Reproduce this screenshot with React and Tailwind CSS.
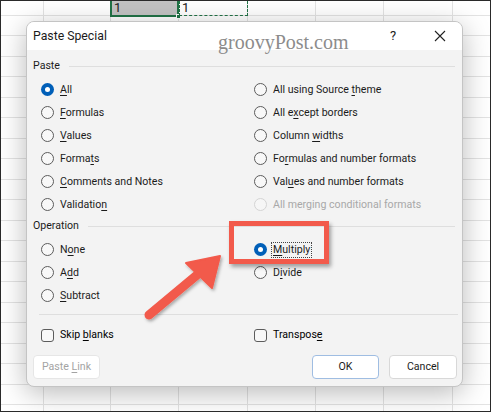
import React from "react";

const font = { fontFamily: "Roboto, Lato, 'Noto Sans', sans-serif" };

const colW = [43, 67, 68, 69, 68, 68, 69, 70];
const rowH = [15, 20, 21, 20, 21, 20, 21, 20, 21, 20, 21, 20, 21, 20, 21, 20, 21, 20, 21, 20, 21];

function Mn({ text, at }) {
  if (at < 0) return <span>{text}</span>;
  return (
    <span>
      {text.slice(0, at)}
      <span className="underline decoration-1 underline-offset-2">{text[at]}</span>
      {text.slice(at + 1)}
    </span>
  );
}

function Radio({ checked, disabled }) {
  if (checked) {
    return (
      <span className="w-[13px] h-[13px] rounded-full bg-[#005fb8] flex items-center justify-center shrink-0">
        <span className="w-[5px] h-[5px] rounded-full bg-white" />
      </span>
    );
  }
  return (
    <span
      className={
        "w-[13px] h-[13px] rounded-full border shrink-0 " +
        (disabled ? "border-[#d4d4d4] bg-[#f6f6f6]" : "border-[#5c5c5c] bg-[#f8f8f8]")
      }
    />
  );
}

function Option({ text, at, checked, disabled, focus }) {
  return (
    <div className="h-[23px] flex items-center gap-[6px]">
      <Radio checked={checked} disabled={disabled} />
      <span
        className={
          (disabled ? "text-[#a8a8a8] " : "text-[#1b1b1b] ") +
          (focus ? "border border-dotted border-[#444] px-[1px] -ml-[2px] leading-[14px]" : "")
        }
      >
        <Mn text={text} at={at} />
      </span>
    </div>
  );
}

function SectionLabel({ title }) {
  return (
    <div className="h-[16px] flex items-center">
      <span className="text-[#1b1b1b]">{title}</span>
      <div className="flex-1 h-px bg-[#dedede] ml-[9px]" />
    </div>
  );
}

function Check({ text, at }) {
  return (
    <div className="h-[20px] flex items-center gap-[6px]">
      <span className="w-[13px] h-[13px] rounded-[3px] border border-[#5c5c5c] bg-[#f8f8f8]" />
      <Mn text={text} at={at} />
    </div>
  );
}

export default function App() {
  return (
    <div
      className="relative w-[491px] h-[412px] overflow-hidden bg-white border border-[#2a2a2a] text-[10.6px]"
      style={font}
    >
      {/* sheet grid */}
      <div className="flex flex-col">
        {rowH.map((h, r) => (
          <div key={r} className="flex" style={{ height: h }}>
            {colW.map((w, c) => (
              <div
                key={c}
                className="border-r border-b border-[#e3e3e3] shrink-0"
                style={{ width: w }}
              />
            ))}
          </div>
        ))}
      </div>

      {/* copied cells */}
      <div className="absolute left-[109px] top-0 w-[69px] h-[16px] bg-[#c3c3c3] border-2 border-t-0 border-[#217346] text-[13px] leading-[13px] pl-[2px] text-[#222]">
        1
      </div>
      <div className="absolute left-[175px] top-[13px] w-[5px] h-[5px] bg-[#217346] border border-white" />
      <div className="absolute left-[178px] top-0 w-[69px] h-[15px] border border-t-0 border-dashed border-[#217346] text-[13px] leading-[13px] pl-[2px] text-[#222]">
        1
      </div>

      {/* dialog */}
      <div className="absolute left-[25px] top-[20px] w-[437px] h-[366px] rounded-[8px] bg-[#f3f3f3] border border-[#c4c4c4] shadow-[0_6px_28px_rgba(0,0,0,0.28)] flex flex-col overflow-hidden">
        <div className="h-[28px] bg-white flex items-center pl-[6px] shrink-0">
          <span className="text-[12.25px] text-[#1b1b1b]">Paste Special</span>
          <span className="ml-auto mr-[15px] text-[13px] text-[#1b1b1b] w-[20px] text-center">?</span>
          <span className="w-[44px] flex justify-center">
            <svg width="12" height="12" viewBox="0 0 12 12">
              <path d="M1 1 L11 11 M11 1 L1 11" stroke="#222" strokeWidth="1.1" />
            </svg>
          </span>
        </div>

        <div className="flex flex-col pl-[6px] pr-[7px] pt-[8px]">
          <SectionLabel title="Paste" />
          <div className="grid grid-cols-[213px_1fr] pl-[8px] mt-[4px]">
            <div className="flex flex-col">
              <Option text="All" at={0} checked />
              <Option text="Formulas" at={0} />
              <Option text="Values" at={0} />
              <Option text="Formats" at={5} />
              <Option text="Comments and Notes" at={0} />
              <Option text="Validation" at={9} />
            </div>
            <div className="flex flex-col">
              <Option text="All using Source theme" at={17} />
              <Option text="All except borders" at={5} />
              <Option text="Column widths" at={7} />
              <Option text="Formulas and number formats" at={2} />
              <Option text="Values and number formats" at={3} />
              <Option text="All merging conditional formats" at={-1} disabled />
            </div>
          </div>

          <div className="mt-[2px]">
            <SectionLabel title="Operation" />
          </div>
          <div className="grid grid-cols-[213px_1fr] pl-[8px] mt-[4px]">
            <div className="flex flex-col">
              <Option text="None" at={1} />
              <Option text="Add" at={1} />
              <Option text="Subtract" at={0} />
            </div>
            <div className="flex flex-col">
              <Option text="Multiply" at={0} checked focus />
              <Option text="Divide" at={1} />
            </div>
          </div>

          <div className="h-px bg-[#dedede] mt-[7px] ml-[6px] mr-[-3px]" />

          <div className="grid grid-cols-[213px_1fr] pl-[8px] mt-[10px]">
            <Check text="Skip blanks" at={5} />
            <Check text="Transpose" at={8} />
          </div>

          <div className="flex items-center mt-[10px]">
            <button className="w-[67px] h-[24px] bg-white border border-[#e6e6e6] rounded-[4px] text-[#a3a3a3] text-[10.6px]">
              <Mn text="Paste Link" at={6} />
            </button>
            <button className="ml-auto w-[67px] h-[24px] bg-white border border-[#9fbde2] rounded-[4px] text-[#1b1b1b] text-[10.6px]">
              OK
            </button>
            <button className="ml-[10px] mr-[-2px] w-[68px] h-[24px] bg-white border border-[#d8d8d8] rounded-[4px] text-[#1b1b1b] text-[10.6px]">
              Cancel
            </button>
          </div>
        </div>
      </div>

      {/* watermark */}
      <div
        className="absolute left-[217px] top-[30px] text-[20px] text-[#8c8c8c] leading-[22px]"
        style={{ fontFamily: "'Liberation Serif', serif" }}
      >
        groovyPost.com
      </div>

      {/* highlight box */}
      <div className="absolute left-[228px] top-[220px] w-[100px] h-[43px] border-[5px] border-[#f25a4b] shadow-[2px_3px_4px_rgba(0,0,0,0.35)]" />

      {/* arrow */}
      <svg className="absolute left-0 top-0" width="491" height="412" viewBox="0 0 491 412">
        <defs>
          <filter id="sh" x="-20%" y="-20%" width="140%" height="140%">
            <feDropShadow dx="1.5" dy="2" stdDeviation="1.5" floodColor="#000" floodOpacity="0.3" />
          </filter>
        </defs>
        <g filter="url(#sh)" fill="#f25a4b" stroke="#f25a4b">
          <line x1="148" y1="314" x2="196" y2="274" strokeWidth="9" strokeLinecap="round" />
          <polygon points="219,255 185,262 211,287" strokeWidth="2" strokeLinejoin="round" />
        </g>
      </svg>
    </div>
  );
}
